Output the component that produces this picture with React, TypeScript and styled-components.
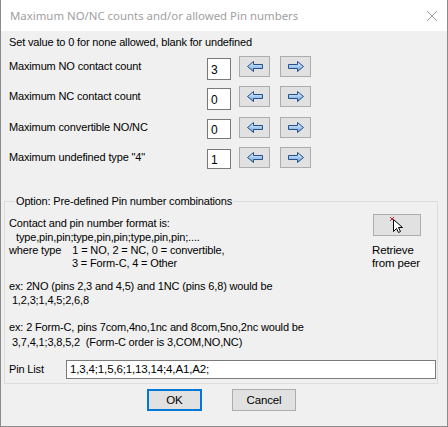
import React from 'react';
import styled, { createGlobalStyle } from 'styled-components';

const GlobalStyle = createGlobalStyle`
  html, body {
    margin: 0;
    padding: 0;
    background: #ffffff;
  }
  * {
    box-sizing: border-box;
  }
`;

const Window = styled.div`
  width: 448px;
  height: 427px;
  display: flex;
  flex-direction: column;
  border: 1px solid #8a8a8a;
  border-top: none;
  font-family: 'Liberation Sans', Arial, sans-serif;
  font-size: 11px;
  letter-spacing: -0.15px;
  color: #000;
`;

const TitleBar = styled.div`
  height: 31px;
  flex: none;
  display: flex;
  align-items: center;
  justify-content: space-between;
  padding: 0 9px 0 9px;
  background: #ffffff;
  font-family: 'Noto Sans', 'Open Sans', sans-serif;
  font-size: 11.4px;
  letter-spacing: 0;
  color: #a0a0a0;
`;

const Body = styled.div`
  flex: 1;
  background: #f0f0f0;
  padding: 5px 9px 0 3px;
  display: flex;
  flex-direction: column;
`;

const Hint = styled.div`
  line-height: 13px;
  padding-left: 5px;
`;

const CountList = styled.div`
  display: flex;
  flex-direction: column;
  padding: 7px 0 0 5px;
`;

const CountRow = styled.div`
  height: 30.3px;
  display: flex;
  align-items: flex-start;
`;

const RowLabel = styled.div`
  width: 198px;
  line-height: 21px;
`;

const NumberBox = styled.div<{ $tall?: boolean }>`
  width: 24px;
  height: ${p => (p.$tall ? 22 : 20)}px;
  margin-top: 2px;
  background: #fff;
  border: 1px solid #7a7a7a;
  padding: 0 0 0 3px;
  font-size: 12px;
  line-height: ${p => (p.$tall ? 22 : 20)}px;
`;

const ArrowButton = styled.div<{ $first?: boolean }>`
  width: 31px;
  height: 21px;
  margin-left: ${p => (p.$first ? 8 : 10)}px;
  display: flex;
  align-items: center;
  justify-content: center;
  background: #e1e1e1;
  border: 1px solid #adadad;
`;

const Group = styled.fieldset`
  margin: 18px 0 0 0;
  padding: 9px 1px 4px 4px;
  border: 1px solid #dcdcdc;
  border-radius: 0;
  min-width: 0;
`;

const Legend = styled.legend`
  padding: 0 1px;
  margin-left: 6px;
  line-height: 13px;
`;

const FormatBlock = styled.div`
  display: flex;
  justify-content: space-between;
`;

const Lines = styled.div<{ $lh: number; $mt?: number }>`
  line-height: ${p => p.$lh}px;
  margin-top: ${p => p.$mt ?? 0}px;
  white-space: pre;
`;

const Indent = styled.span<{ $w: number }>`
  display: inline-block;
  width: ${p => p.$w}px;
`;

const RetrieveColumn = styled.div`
  width: 50px;
  margin-right: 14px;
  display: flex;
  flex-direction: column;
  align-items: flex-start;
`;

const RetrieveButton = styled.div`
  width: 48px;
  height: 22px;
  margin-top: -3px;
  margin-left: 1px;
  background: #e1e1e1;
  border: 1px solid #adadad;
  display: flex;
  justify-content: center;
  align-items: flex-start;
  padding-top: 1px;
`;

const RetrieveLabel = styled.div`
  margin-top: 8px;
  line-height: 12.5px;
  font-size: 11.5px;
`;

const PinRow = styled.div`
  display: flex;
  align-items: center;
  margin-top: 10px;
`;

const PinLabel = styled.div`
  width: 57px;
`;

const PinInput = styled.div`
  flex: 1;
  height: 19px;
  background: #fff;
  border: 1px solid #7a7a7a;
  padding-left: 3px;
  line-height: 17px;
  font-size: 11.5px;
`;

const ButtonBar = styled.div`
  display: flex;
  justify-content: center;
  gap: 30px;
  margin-top: 5px;
  padding-left: 1px;
`;

const DialogButton = styled.div<{ $default?: boolean; $w: number }>`
  width: ${p => p.$w}px;
  height: 22px;
  display: flex;
  align-items: center;
  justify-content: center;
  background: #e1e1e1;
  border: ${p => (p.$default ? '2px solid #0078d7' : '1px solid #adadad')};
  font-size: 11.5px;
`;

const CloseIcon = () => (
  <svg width="12" height="12" viewBox="0 0 12 12">
    <path d="M1 1 L11 11 M11 1 L1 11" stroke="#9a9a9a" strokeWidth="1" fill="none" />
  </svg>
);

const Arrow = ({ dir }: { dir: 'left' | 'right' }) => (
  <svg width="18" height="13" viewBox="0 0 18 13">
    <defs>
      <linearGradient id={`ag-${dir}`} x1="0" y1="0" x2="0" y2="1">
        <stop offset="0" stopColor="#e4f0fb" />
        <stop offset="0.5" stopColor="#a9cbef" />
        <stop offset="1" stopColor="#5f9ad8" />
      </linearGradient>
    </defs>
    <path
      d="M1.5 6.5 L7.5 1.5 L7.5 4.5 L16.5 4.5 L16.5 8.5 L7.5 8.5 L7.5 11.5 Z"
      transform={dir === 'right' ? 'translate(18 0) scale(-1 1)' : undefined}
      fill={`url(#ag-${dir})`}
      stroke="#25508a"
      strokeWidth="1"
      strokeLinejoin="miter"
    />
  </svg>
);

const PickCursor = () => (
  <svg width="18" height="18" viewBox="0 0 18 18">
    <path d="M2 1 L6 5 M6 1 L2 5" stroke="#c0202a" strokeWidth="1" />
    <path
      d="M5.5 3.5 L5.5 15.5 L8.5 12.5 L10.5 16.5 L12.5 15.5 L10.5 11.5 L14.5 11.5 Z"
      fill="#ffffff"
      stroke="#000000"
      strokeWidth="1"
      strokeLinejoin="miter"
    />
  </svg>
);

const counts = [
  { label: 'Maximum NO contact count', value: '3', tall: true },
  { label: 'Maximum NC contact count', value: '0', tall: true },
  { label: 'Maximum convertible NO/NC', value: '0', tall: false },
  { label: 'Maximum undefined type "4"', value: '1', tall: false },
];

export default function App() {
  return (
    <>
      <GlobalStyle />
      <Window>
        <TitleBar>
          <span>Maximum NO/NC counts and/or allowed Pin numbers</span>
          <CloseIcon />
        </TitleBar>
        <Body>
          <Hint>Set value to 0 for none allowed, blank for undefined</Hint>
          <CountList>
            {counts.map(c => (
              <CountRow key={c.label}>
                <RowLabel>{c.label}</RowLabel>
                <NumberBox $tall={c.tall}>{c.value}</NumberBox>
                <ArrowButton $first>
                  <Arrow dir="left" />
                </ArrowButton>
                <ArrowButton>
                  <Arrow dir="right" />
                </ArrowButton>
              </CountRow>
            ))}
          </CountList>

          <Group>
            <Legend>Option: Pre-defined Pin number combinations</Legend>
            <FormatBlock>
              <Lines $lh={13.4}>
                <div>Contact and pin number format is:</div>
                <div>
                  <Indent $w={7} />type,pin,pin;type,pin,pin;type,pin,pin;....
                </div>
                <div>
                  where type<Indent $w={11} />1 = NO, 2 = NC, 0 = convertible,
                </div>
                <div>
                  <Indent $w={63} />3 = Form-C, 4 = Other
                </div>
              </Lines>
              <RetrieveColumn>
                <RetrieveButton>
                  <PickCursor />
                </RetrieveButton>
                <RetrieveLabel>
                  Retrieve
                  <br />
                  from peer
                </RetrieveLabel>
              </RetrieveColumn>
            </FormatBlock>
            <Lines $lh={14} $mt={8}>
              <div>ex: 2NO (pins 2,3 and 4,5) and 1NC (pins 6,8) would be</div>
              <div> 1,2,3;1,4,5;2,6,8</div>
            </Lines>
            <Lines $lh={15} $mt={13}>
              <div>ex: 2 Form-C, pins 7com,4no,1nc and 8com,5no,2nc would be</div>
              <div> 3,7,4,1;3,8,5,2  (Form-C order is 3,COM,NO,NC)</div>
            </Lines>
            <PinRow>
              <PinLabel>Pin List</PinLabel>
              <PinInput>1,3,4;1,5,6;1,13,14;4,A1,A2;</PinInput>
            </PinRow>
          </Group>

          <ButtonBar>
            <DialogButton $default $w={55}>OK</DialogButton>
            <DialogButton $w={64}>Cancel</DialogButton>
          </ButtonBar>
        </Body>
      </Window>
    </>
  );
}
